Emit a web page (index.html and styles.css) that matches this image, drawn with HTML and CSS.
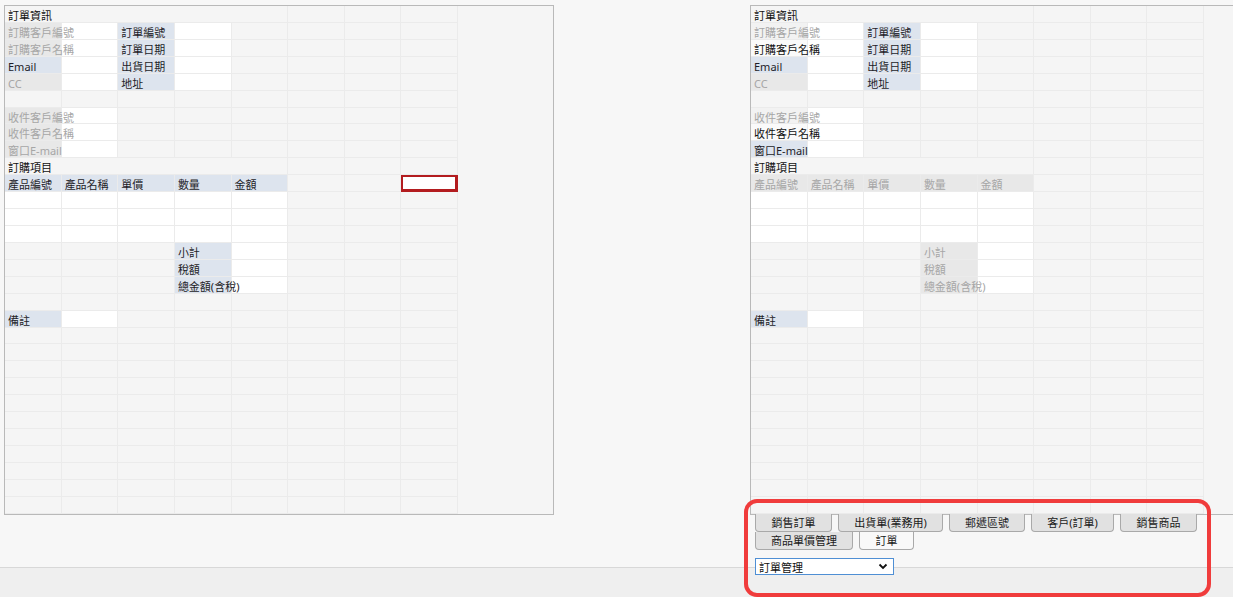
FILE: index.html
```html
<!DOCTYPE html>
<html lang="zh-Hant">

<head>
    <meta charset="UTF-8">
    <meta name="viewport" content="width=device-width, initial-scale=1.0">
    <title>訂單管理</title>
    <link rel="stylesheet" href="styles.css">
</head>

<body>
    <div class="app">
        <!-- left sheet: design view -->
        <div class="panel panel-left">
            <div class="sheet">
                <b class="title">訂單資訊</b><i></i><i></i><i></i>
                <b class="gy">訂購客戶編號</b><i class="w"></i><b class="bl">訂單編號</b><i class="w"></i><i></i><i></i><i></i><i></i>
                <b class="gy">訂購客戶名稱</b><i class="w"></i><b class="bl">訂單日期</b><i class="w"></i><i></i><i></i><i></i><i></i>
                <b class="bl">Email</b><i class="w"></i><b class="bl">出貨日期</b><i class="w"></i><i></i><i></i><i></i><i></i>
                <b class="gy">CC</b><i class="w"></i><b class="bl">地址</b><i class="w"></i><i></i><i></i><i></i><i></i>
                <i></i><i></i><i></i><i></i><i></i><i></i><i></i><i></i>
                <b class="gy">收件客戶編號</b><i class="w"></i><i></i><i></i><i></i><i></i><i></i><i></i>
                <b class="gy">收件客戶名稱</b><i class="w"></i><i></i><i></i><i></i><i></i><i></i><i></i>
                <b class="gy">窗口E-mail</b><i class="w"></i><i></i><i></i><i></i><i></i><i></i><i></i>
                <b class="title">訂購項目</b><i></i><i></i><i></i>
                <b class="bl">產品編號</b><b class="bl">產品名稱</b><b class="bl">單價</b><b class="bl">數量</b><b class="bl">金額</b><i></i><i></i><i class="pick"></i>
                <i class="w"></i><i class="w"></i><i class="w"></i><i class="w"></i><i class="w"></i><i></i><i></i><i></i>
                <i class="w"></i><i class="w"></i><i class="w"></i><i class="w"></i><i class="w"></i><i></i><i></i><i></i>
                <i class="w"></i><i class="w"></i><i class="w"></i><i class="w"></i><i class="w"></i><i></i><i></i><i></i>
                <i></i><i></i><i></i><b class="bl">小計</b><i class="w"></i><i></i><i></i><i></i>
                <i></i><i></i><i></i><b class="bl">稅額</b><i class="w"></i><i></i><i></i><i></i>
                <i></i><i></i><i></i><b class="bl">總金額(含稅)</b><i class="w"></i><i></i><i></i><i></i>
                <i></i><i></i><i></i><i></i><i></i><i></i><i></i><i></i>
                <b class="bl">備註</b><i class="w"></i><i></i><i></i><i></i><i></i><i></i><i></i>
                <i></i><i></i><i></i><i></i><i></i><i></i><i></i><i></i>
                <i></i><i></i><i></i><i></i><i></i><i></i><i></i><i></i>
                <i></i><i></i><i></i><i></i><i></i><i></i><i></i><i></i>
                <i></i><i></i><i></i><i></i><i></i><i></i><i></i><i></i>
                <i></i><i></i><i></i><i></i><i></i><i></i><i></i><i></i>
                <i></i><i></i><i></i><i></i><i></i><i></i><i></i><i></i>
                <i></i><i></i><i></i><i></i><i></i><i></i><i></i><i></i>
                <i></i><i></i><i></i><i></i><i></i><i></i><i></i><i></i>
                <i></i><i></i><i></i><i></i><i></i><i></i><i></i><i></i>
                <i></i><i></i><i></i><i></i><i></i><i></i><i></i><i></i>
                <i></i><i></i><i></i><i></i><i></i><i></i><i></i><i></i>
            </div>
        </div>

        <!-- right sheet: form view + navigation -->
        <div class="side">
            <div class="panel panel-right">
                <div class="sheet">
                    <b class="title">訂單資訊</b><i></i><i></i><i></i>
                    <b class="mt">訂購客戶編號</b><i class="w"></i><b class="bl">訂單編號</b><i class="w"></i><i></i><i></i><i></i><i></i>
                    <b class="pl">訂購客戶名稱</b><i class="w"></i><b class="bl">訂單日期</b><i class="w"></i><i></i><i></i><i></i><i></i>
                    <b class="bl">Email</b><i class="w"></i><b class="bl">出貨日期</b><i class="w"></i><i></i><i></i><i></i><i></i>
                    <b class="gy">CC</b><i class="w"></i><b class="bl">地址</b><i class="w"></i><i></i><i></i><i></i><i></i>
                    <i></i><i></i><i></i><i></i><i></i><i></i><i></i><i></i>
                    <b class="mt">收件客戶編號</b><i class="w"></i><i></i><i></i><i></i><i></i><i></i><i></i>
                    <b class="pl">收件客戶名稱</b><i class="w"></i><i></i><i></i><i></i><i></i><i></i><i></i>
                    <b class="bl">窗口E-mail</b><i class="w"></i><i></i><i></i><i></i><i></i><i></i><i></i>
                    <b class="title">訂購項目</b><i></i><i></i><i></i>
                    <b class="gy">產品編號</b><b class="gy">產品名稱</b><b class="gy">單價</b><b class="gy">數量</b><b class="gy">金額</b><i></i><i></i><i></i>
                    <i class="w"></i><i class="w"></i><i class="w"></i><i class="w"></i><i class="w"></i><i></i><i></i><i></i>
                    <i class="w"></i><i class="w"></i><i class="w"></i><i class="w"></i><i class="w"></i><i></i><i></i><i></i>
                    <i class="w"></i><i class="w"></i><i class="w"></i><i class="w"></i><i class="w"></i><i></i><i></i><i></i>
                    <i></i><i></i><i></i><b class="gy">小計</b><i class="w"></i><i></i><i></i><i></i>
                    <i></i><i></i><i></i><b class="gy">稅額</b><i class="w"></i><i></i><i></i><i></i>
                    <i></i><i></i><i></i><b class="gy">總金額(含稅)</b><i class="w"></i><i></i><i></i><i></i>
                    <i></i><i></i><i></i><i></i><i></i><i></i><i></i><i></i>
                    <b class="bl">備註</b><i class="w"></i><i></i><i></i><i></i><i></i><i></i><i></i>
                    <i></i><i></i><i></i><i></i><i></i><i></i><i></i><i></i>
                    <i></i><i></i><i></i><i></i><i></i><i></i><i></i><i></i>
                    <i></i><i></i><i></i><i></i><i></i><i></i><i></i><i></i>
                    <i></i><i></i><i></i><i></i><i></i><i></i><i></i><i></i>
                    <i></i><i></i><i></i><i></i><i></i><i></i><i></i><i></i>
                    <i></i><i></i><i></i><i></i><i></i><i></i><i></i><i></i>
                    <i></i><i></i><i></i><i></i><i></i><i></i><i></i><i></i>
                    <i></i><i></i><i></i><i></i><i></i><i></i><i></i><i></i>
                    <i></i><i></i><i></i><i></i><i></i><i></i><i></i><i></i>
                    <i></i><i></i><i></i><i></i><i></i><i></i><i></i><i></i>
                    <i></i><i></i><i></i><i></i><i></i><i></i><i></i><i></i>
                </div>
            </div>

            <div class="tabs">
                <span class="tab t1">銷售訂單</span>
                <span class="tab t2">出貨單(業務用)</span>
                <span class="tab t3">郵遞區號</span>
                <span class="tab t4">客戶(訂單)</span>
                <span class="tab t5">銷售商品</span>
                <span class="tab t6">商品單價管理</span>
                <span class="tab t7 on">訂單</span>
            </div>

            <div class="picker">
                <span>訂單管理</span>
                <svg width="10" height="7" viewBox="0 0 10 7">
                    <polyline points="1.5,1.5 5,5 8.5,1.5" fill="none" stroke="#111" stroke-width="1.8" />
                </svg>
            </div>
        </div>
    </div>

    <div class="status"></div>

    <div class="callout"></div>
</body>

</html>
```

FILE: styles.css
```css
html,
body {
    margin: 0;
    padding: 0;
    overflow: hidden;
}

body {
    background-color: #fff;
    font-family: "Noto Sans", "Noto Sans CJK TC", sans-serif;
    font-size: 11px;
    color: #1d1d28;
}

.app {
    display: flex;
    align-items: flex-start;
    height: 567px;
    padding-top: 5px;
    box-sizing: border-box;
    background-color: #f7f7f7;
}

.panel {
    height: 510px;
    box-sizing: border-box;
    border: 1px solid #b9b9b9;
    background-color: #f5f5f5;
}

.panel-left {
    width: 550px;
    margin-left: 4px;
}

.side {
    flex: 1;
    margin-left: 196px;
}

.panel-right {
    border-right: none;
}

/* spreadsheet-like grid */
.sheet {
    display: grid;
    grid-template-columns: repeat(8, 56.625px);
    grid-auto-rows: 16.933px;
    width: 453px;
}

.sheet > * {
    box-sizing: border-box;
    border-right: 1px solid #ebebeb;
    border-bottom: 1px solid #ebebeb;
    font-style: normal;
    font-weight: normal;
    line-height: 16px;
    padding: 2px 0 0 3px;
    white-space: nowrap;
}

.sheet .title {
    grid-column: span 5;
    color: #111;
}

.sheet .w {
    background-color: #fff;
}

.sheet .bl,
.sheet .gy,
.sheet .mt,
.sheet .pl {
    position: relative;
}

.sheet .bl {
    background-color: #dde4ee;
    color: #1d1d28;
}

.sheet .gy {
    background-color: #e8e8e8;
    color: #a6a6a6;
}

.sheet .mt {
    background-color: #f2f2f2;
    color: #a6a6a6;
}

.sheet .pl {
    background-color: #fafafa;
    color: #111;
}

.sheet .pick {
    position: relative;
    background-color: #fff;
    box-shadow: inset 0 0 0 2px #b31c1f;
    border-color: #b31c1f;
}

/* bottom navigation tabs */
.tabs {
    display: flex;
    flex-wrap: wrap;
    column-gap: 6px;
    width: 450px;
    margin-top: -1px;
    padding-left: 5px;
}

.tab {
    height: 18px;
    box-sizing: border-box;
    border: 1px solid #a9a9a9;
    border-top: none;
    border-radius: 0 0 4px 4px;
    background-color: #e1e1e1;
    text-align: center;
    line-height: 17px;
    color: #1a1a1a;
}

.tab.on {
    background-color: #f9f9f9;
}

.t1 { width: 77px; }
.t2 { width: 105px; }
.t3 { width: 76px; }
.t4 { width: 83px; }
.t5 { width: 77px; }
.t6 { width: 98px; }
.t7 { width: 55px; }

.picker {
    position: relative;
    z-index: 1;
    display: flex;
    align-items: center;
    justify-content: space-between;
    width: 139px;
    height: 17px;
    margin: 8px 0 0 5px;
    padding: 0 5px 0 3px;
    box-sizing: border-box;
    border: 1px solid #4f8fd4;
    background-color: #fff;
    color: #111;
}

.status {
    height: 30px;
    box-sizing: border-box;
    border-top: 1px solid #d8d8d8;
    background-color: #efefef;
}

/* highlight drawn over the navigation area */
.callout {
    position: absolute;
    left: 744px;
    top: 499px;
    width: 467px;
    height: 98px;
    box-sizing: border-box;
    border: 4px solid #f03c3c;
    border-radius: 13px;
    pointer-events: none;
}
```
